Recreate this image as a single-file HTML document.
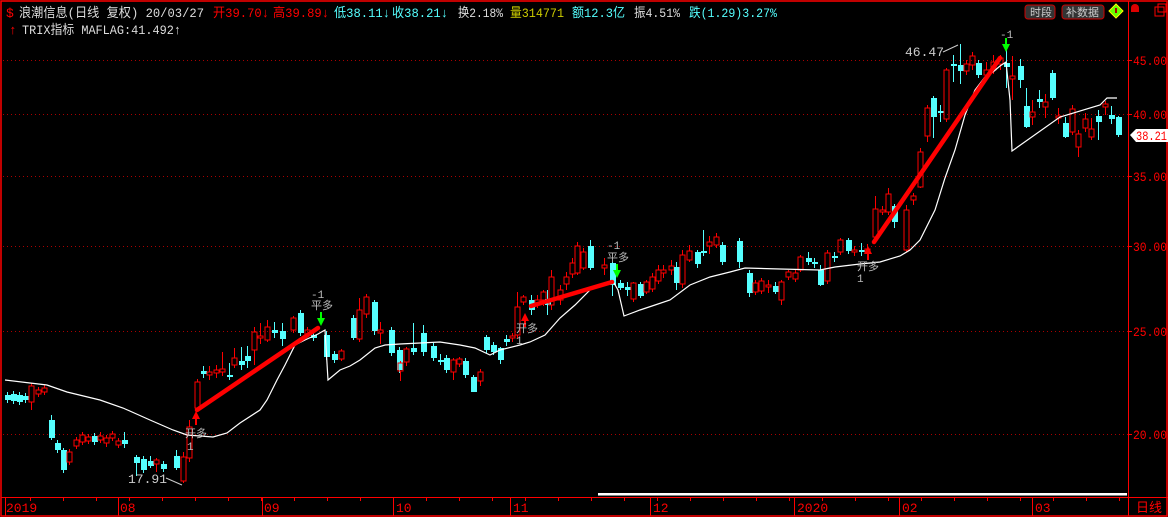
<!DOCTYPE html>
<html><head><meta charset="utf-8"><style>
html,body{margin:0;padding:0;background:#000;width:1168px;height:517px;overflow:hidden}
svg{display:block}
text{font-family:"Liberation Mono","Noto Sans CJK SC",monospace}
</style></head><body>
<svg id="s" width="1168" height="517" xmlns="http://www.w3.org/2000/svg">
<rect x="0" y="0" width="1168" height="517" fill="#000"/>
<rect x="1" y="1" width="1166" height="515" fill="none" stroke="#f00" stroke-width="1.5"/>
<line x1="1128.5" y1="1" x2="1128.5" y2="516" stroke="#f00"/>
<line x1="1" y1="497.5" x2="1168" y2="497.5" stroke="#f00"/>
<g stroke="#a00" stroke-dasharray="1,3" stroke-width="1">
<line x1="3" y1="60.5" x2="1128" y2="60.5"/>
<line x1="3" y1="114.5" x2="1128" y2="114.5"/>
<line x1="3" y1="176.5" x2="1128" y2="176.5"/>
<line x1="3" y1="246.5" x2="1128" y2="246.5"/>
<line x1="3" y1="331.5" x2="1128" y2="331.5"/>
<line x1="3" y1="434.5" x2="1128" y2="434.5"/>
</g>
<g fill="#f00" font-size="13">
<text x="1133" y="65" textLength="34" lengthAdjust="spacingAndGlyphs">45.00</text>
<text x="1133" y="119" textLength="34" lengthAdjust="spacingAndGlyphs">40.00</text>
<text x="1133" y="181" textLength="34" lengthAdjust="spacingAndGlyphs">35.00</text>
<text x="1133" y="251" textLength="34" lengthAdjust="spacingAndGlyphs">30.00</text>
<text x="1133" y="336" textLength="34" lengthAdjust="spacingAndGlyphs">25.00</text>
<text x="1133" y="439" textLength="34" lengthAdjust="spacingAndGlyphs">20.00</text>
</g>
<g stroke="#f00"><line x1="1128" y1="60.5" x2="1132" y2="60.5"/><line x1="1128" y1="114.5" x2="1132" y2="114.5"/><line x1="1128" y1="176.5" x2="1132" y2="176.5"/><line x1="1128" y1="246.5" x2="1132" y2="246.5"/><line x1="1128" y1="331.5" x2="1132" y2="331.5"/><line x1="1128" y1="434.5" x2="1132" y2="434.5"/></g>
<path d="M1130 135 L1136 129 L1168 129 L1168 142 L1136 142 Z" fill="#fff"/>
<text x="1136" y="140" fill="#f00" font-size="13" textLength="31" lengthAdjust="spacingAndGlyphs">38.21</text>
<rect x="598" y="493" width="529" height="3" fill="#fff"/>
<line x1="598" y1="495.5" x2="1127" y2="495.5" stroke="#888"/>
<g id="axis" stroke="#f00"></g>
<g fill="#f00" font-size="13">
<text x="6" y="512">2019</text><text x="120" y="512">08</text><text x="264" y="512">09</text><text x="396" y="512">10</text><text x="513" y="512">11</text><text x="653" y="512">12</text><text x="797" y="512">2020</text><text x="902" y="512">02</text><text x="1035" y="512">03</text>
<text x="1136" y="512" font-family="Noto Sans CJK SC,sans-serif">日线</text>
</g>
<g id="c"></g>
<polyline fill="none" stroke="#fff" stroke-width="1.2" points="5,380 30,383 47,385 67,392 100,400 123,408 150,420 173,430 187,435 213,437 227,433 240,423 260,410 267,400 277,380 285,365 295,345 305,340 318,334 325,330 328,380 340,370 350,366 360,360 375,348 385,345 400,344 440,342 460,345 475,348 490,355 500,350 520,345 530,342 545,335 560,318 575,305 590,290 600,285 614,283 618,290 624,316 640,310 655,305 670,300 690,285 710,277 730,272 745,268 780,269 820,270 835,267 860,264 880,262 900,256 910,250 920,240 935,210 945,178 955,150 965,115 975,90 985,77 993,72 1000,66 1006,62 1010,100 1012,151 1060,117 1100,105 1107,98 1117,98"/>
<polyline fill="none" stroke="#ccc" points="166,478 182,485"/>
<polyline fill="none" stroke="#ccc" points="943,52 958,45"/>
<g stroke="#f00" stroke-width="4.5" stroke-linecap="round">
<line x1="197" y1="410" x2="318" y2="328"/>
<line x1="531" y1="306" x2="612" y2="282"/>
<line x1="874" y1="242" x2="1000" y2="58"/>
</g>
<g fill="#f00">
<path d="M192 419 L196 411 L200 419 Z"/><rect x="195" y="419" width="2" height="6"/>
<path d="M521 321 L525 313 L529 321 Z"/><rect x="524" y="321" width="2" height="6"/>
<path d="M864 254 L868 246 L872 254 Z"/><rect x="867" y="254" width="2" height="6"/>
</g>
<g fill="#0f0">
<rect x="320" y="312" width="2" height="6"/><path d="M317 318 L321 326 L325 318 Z"/>
<rect x="616" y="264" width="2" height="6"/><path d="M613 270 L617 278 L621 270 Z"/>
<rect x="1005" y="38" width="2" height="6"/><path d="M1002 44 L1006 52 L1010 44 Z"/>
</g>
<g fill="#bbb" font-size="11">
<text x="185" y="437" font-family="Noto Sans CJK SC,sans-serif">开多</text><text x="187" y="450">1</text>
<text x="516" y="332" font-family="Noto Sans CJK SC,sans-serif">开多</text><text x="516" y="344">1</text>
<text x="857" y="270" font-family="Noto Sans CJK SC,sans-serif">开多</text><text x="857" y="282">1</text>
<text x="311" y="298">-1</text><text x="311" y="309" font-family="Noto Sans CJK SC,sans-serif">平多</text>
<text x="607" y="249">-1</text><text x="607" y="261" font-family="Noto Sans CJK SC,sans-serif">平多</text>
<text x="1000" y="38">-1</text>
</g>
<g fill="#ccc" font-size="13"><text x="128" y="483">17.91</text><text x="905" y="56">46.47</text></g>
<g font-size="13" font-family="Liberation Mono,Noto Sans CJK SC,monospace" lengthAdjust="spacingAndGlyphs">
<text x="6" y="17" fill="#f00">$</text>
<text x="19" y="17" fill="#ddd" textLength="185" lengthAdjust="spacingAndGlyphs">浪潮信息(日线 复权) 20/03/27</text>
<text x="213" y="17" fill="#f00" textLength="56" lengthAdjust="spacingAndGlyphs">开39.70↓</text>
<text x="273" y="17" fill="#f00" textLength="56" lengthAdjust="spacingAndGlyphs">高39.89↓</text>
<text x="334" y="17" fill="#5ff" textLength="56" lengthAdjust="spacingAndGlyphs">低38.11↓</text>
<text x="392" y="17" fill="#5ff" textLength="56" lengthAdjust="spacingAndGlyphs">收38.21↓</text>
<text x="458" y="17" fill="#ddd" textLength="45" lengthAdjust="spacingAndGlyphs">换2.18%</text>
<text x="510" y="17" fill="#cc0" textLength="54" lengthAdjust="spacingAndGlyphs">量314771</text>
<text x="572" y="17" fill="#5ff" textLength="53" lengthAdjust="spacingAndGlyphs">额12.3亿</text>
<text x="634" y="17" fill="#ddd" textLength="46" lengthAdjust="spacingAndGlyphs">振4.51%</text>
<text x="689" y="17" fill="#5ff" textLength="88" lengthAdjust="spacingAndGlyphs">跌(1.29)3.27%</text>
<text x="9" y="34" fill="#f00">↑</text>
<text x="22" y="34" fill="#ddd" textLength="159" lengthAdjust="spacingAndGlyphs">TRIX指标 MAFLAG:41.492↑</text>
</g>
<rect x="1025" y="5" width="30" height="14" rx="3" fill="#333" stroke="#c00"/>
<text x="1030" y="16" fill="#ccc" font-size="11" font-family="Noto Sans CJK SC,sans-serif">时段</text>
<rect x="1062" y="5" width="42" height="14" rx="3" fill="#333" stroke="#c00"/>
<text x="1066" y="16" fill="#ccc" font-size="11" font-family="Noto Sans CJK SC,sans-serif">补数据</text>
<path d="M1116 4 L1123 11 L1116 18 L1109 11 Z" fill="#6f0" stroke="#ff0"/>
<rect x="1115" y="8" width="2" height="5" fill="#a00"/>
<path d="M1131 8 a4 4 0 0 1 8 0 v4 h-8 z" fill="#d00"/>
<rect x="1155" y="7" width="9" height="9" fill="none" stroke="#f00"/>
<rect x="1158" y="4" width="8" height="8" fill="none" stroke="#f00"/>
</svg>
<script>
var d=[
[7,395,400,'c'],[13,394,401,'c'],[19,395,402,'c'],[25,396,400,'c'],[31,386,402,'r',383,410],[38,390,394,'r'],[44,388,392,'r'],
[51,420,438,'c',415,440],[57,443,450,'c'],[63,450,470,'c',448,473],[69,452,462,'r'],[76,440,446,'r'],[82,435,442,'r',432,445],[88,437,441,'r'],[94,436,442,'c'],[100,436,440,'r',432,443],[106,438,443,'r',435,447],[112,434,438,'r'],[118,441,445,'r'],[124,440,444,'c',432,448],
[136,457,463,'c',455,476],[143,459,470,'c'],[150,461,466,'c',456,468],[156,460,464,'r',458,472],[163,464,469,'c'],[176,456,468,'c',450,470],[183,457,481,'r',452,483],[189,427,458,'r',420,462],[197,382,408,'r'],
[203,371,374,'c',366,378],[209,372,375,'r',366,380],[216,370,373,'r',365,378],[222,369,372,'r',352,376],[229,375,377,'c',363,380],[234,358,365,'r',348,368],[241,361,365,'c',347,370],[247,356,361,'c',346,368],[254,332,350,'r',327,365],[260,336,338,'r',323,344],[267,327,340,'r',320,342],[274,330,333,'c',322,338],[282,331,339,'c',323,346],[293,318,330,'r',316,333],[300,313,333,'c'],[307,330,334,'r'],[313,335,338,'c'],[326,335,357,'c',331,360],[334,354,360,'c'],[341,351,359,'r',349,361],
[353,318,338,'c',315,340],[359,310,339,'r',298,342],[366,297,314,'r',294,318],[374,302,331,'c',300,335],[380,330,333,'r',322,344],[391,330,353,'c'],[399,350,370,'c'],[400,363,371,'r',361,381],[406,349,362,'r',347,366],[413,348,352,'c',323,355],[423,333,352,'c',325,356],[433,346,358,'c'],[440,360,362,'c',354,365],[446,358,370,'c'],[453,360,372,'r',358,380],[459,359,364,'r',357,367],[465,361,375,'c'],[473,377,392,'c',375,392],[480,372,381,'r',369,386],[486,337,350,'c',335,353],[493,345,352,'c'],[500,348,360,'c',347,364],[506,339,342,'c',335,346],
[512,336,338,'r',333,342],[517,307,335,'r',292,338],[523,297,302,'r',295,305],[531,300,310,'c',295,315],[537,300,304,'r',295,308],[543,292,300,'r',290,306],[547,299,305,'c',290,315],[551,277,305,'r',270,310],[560,290,300,'r',285,305],[566,277,284,'r',272,290],[572,263,274,'r',258,278],[577,246,273,'r',242,275],[583,252,268,'r',248,270],[590,246,268,'c',240,270],[604,265,268,'r',258,275],[612,263,285,'c',262,296],[620,283,288,'c',280,290],[627,287,290,'c',282,296],[633,283,299,'r',282,302],[640,284,296,'c',282,298],[646,282,292,'r',280,294],[652,277,289,'r',273,292],[658,270,281,'r',265,284],[663,270,273,'r',265,278],[671,266,270,'r',260,275],[676,267,283,'c',262,290],[682,255,284,'r',250,288],[689,251,260,'r',245,262],[697,252,264,'c',250,268],[703,251,253,'c',230,256],[709,242,246,'r',236,254],[716,237,245,'r',233,248],[722,245,262,'c',242,265],[739,241,262,'c',238,268],
[749,273,293,'c',270,297],[755,283,292,'r',280,295],[761,281,291,'r',278,294],[768,285,287,'r',280,293],[775,286,292,'c',282,294],[781,282,300,'r',280,305],[788,272,277,'r',270,280],[795,273,279,'r'],[800,257,270,'r',255,272],[808,258,262,'c',252,265],[814,262,264,'c',258,268],[820,270,285,'c',265,286],[827,253,281,'r',250,284],[834,256,258,'c',252,262],[840,240,252,'r',238,255],[848,240,251,'c',238,254],[854,250,252,'r',246,256],[861,250,252,'c',243,256],[867,249,253,'r',244,258],
[875,209,237,'r',196,240],[882,210,212,'r',206,215],[888,194,212,'r',188,215],[894,206,222,'c',204,228],[906,210,250,'r',205,252],[913,196,200,'r',193,205],[920,152,187,'r',148,188],[927,108,136,'r',105,142],[933,98,117,'c',96,138],[940,111,113,'c',105,122],[946,70,119,'r',68,122],[953,64,66,'c',55,82],[960,65,71,'c',44,84],[966,64,71,'r',60,75],[972,56,65,'r',52,70],[978,63,75,'c',60,78],[986,70,75,'r',62,78],[993,62,70,'r',55,74],[1000,58,64,'r',55,70],
[1006,63,67,'c',48,88],[1012,76,79,'r',56,100],[1020,66,80,'c',59,88],[1026,106,127,'c',88,128],[1032,112,117,'r',100,125],[1039,99,102,'c',90,108],[1045,102,107,'r',94,118],[1052,73,98,'c',70,100],[1058,116,118,'r',108,124],[1065,123,137,'c',117,138],[1072,109,132,'r',105,135],[1078,134,147,'r',130,157],[1085,119,128,'r',113,132],[1091,129,137,'r',118,140],[1098,116,122,'c',110,140],[1105,104,107,'r',101,115],[1111,115,119,'c',106,124],[1118,117,135,'c',116,137]
];
var g=document.getElementById('c'),h='';
d.forEach(function(e){var x=e[0],t=e[1],b=e[2],hi=e[4]||t-3,lo=e[5]||b+3;
 if(e[3]=='r'){h+='<line x1="'+(x+.5)+'" y1="'+hi+'" x2="'+(x+.5)+'" y2="'+t+'" stroke="#f00"/><line x1="'+(x+.5)+'" y1="'+b+'" x2="'+(x+.5)+'" y2="'+lo+'" stroke="#f00"/><rect x="'+(x-2)+'" y="'+t+'" width="5" height="'+Math.max(b-t,1)+'" fill="none" stroke="#f00"/>';}
 else{h+='<line x1="'+(x+.5)+'" y1="'+hi+'" x2="'+(x+.5)+'" y2="'+lo+'" stroke="#5ff"/><rect x="'+(x-2)+'" y="'+t+'" width="6" height="'+Math.max(b-t,1.5)+'" fill="#5ff"/>';}
});
g.innerHTML=h;
var a=document.getElementById('axis'),s='';
[5,118,262,393,510,650,794,899,1032].forEach(function(x){s+='<line x1="'+(x+.5)+'" y1="498" x2="'+(x+.5)+'" y2="516"/>';});
for(var x=30;x<1125;x+=33){s+='<line x1="'+(x+.5)+'" y1="498" x2="'+(x+.5)+'" y2="501"/>';}
a.innerHTML=s;
</script>
</body></html>
